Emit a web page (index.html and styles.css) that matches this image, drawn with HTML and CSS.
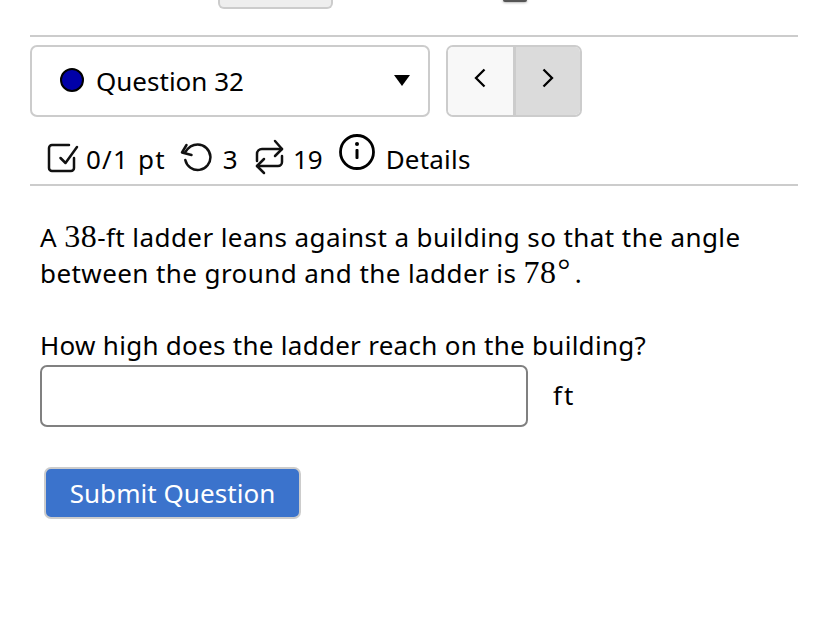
FILE: index.html
```html
<!DOCTYPE html>
<html lang="en">
<head>
    <meta charset="UTF-8">
    <title>Question 32</title>
    <link rel="stylesheet" href="styles.css">
</head>
<body>
    <div class="top-strip">
        <div class="stub-button"></div>
        <div class="stub-dot"></div>
    </div>

    <div class="question-nav">
        <div class="question-select">
            <span class="status-dot"></span>
            <span class="question-name">Question 32</span>
            <span class="select-arrow"></span>
        </div>
        <div class="nav-buttons">
            <div class="nav-btn">
                <svg width="14" height="22" viewBox="0 0 14 22"><path d="M11.500 2.500 3 11l8.500 8.500" fill="none" stroke="#000" stroke-width="2.300"/></svg>
            </div>
            <div class="nav-btn nav-btn-active">
                <svg width="14" height="22" viewBox="0 0 14 22"><path d="M2.500 2.500 11 11l-8.500 8.500" fill="none" stroke="#000" stroke-width="2.300"/></svg>
            </div>
        </div>
    </div>

    <div class="info-bar">
        <svg class="icon-check" width="32" height="30" viewBox="0 0 32 30" fill="none" stroke="#111" stroke-width="2.500" stroke-linecap="round" stroke-linejoin="round">
            <path d="M27 15v10a3 3 0 0 1-3 3H5a3 3 0 0 1-3-3V5a3 3 0 0 1 3-3h17"/>
            <path d="m13.500 15 5 5L30 4"/>
        </svg>
        <span class="info-text info-pts">0/1 pt</span>
        <svg class="icon-retry" width="32" height="30" viewBox="0 0 32 30" fill="none" stroke="#111" stroke-width="2.500" stroke-linecap="round" stroke-linejoin="round">
            <path d="M5 10.500Q10 2.600 17.700 2.600A12.700 12.700 0 1 1 5.300 18"/>
            <path d="M6.500 3 2 10.500l9.500 2.500"/>
        </svg>
        <span class="info-text info-tries">3</span>
        <svg class="icon-repeat" width="32" height="36" viewBox="0 0 32 36" fill="none" stroke="#111" stroke-width="2.500" stroke-linecap="round" stroke-linejoin="round">
            <path d="M4 22v-7a5 5 0 0 1 5-5h20"/>
            <path d="m22 2 7 8-7 7"/>
            <path d="M29 17v6a4 4 0 0 1-4 4H4"/>
            <path d="m11 20-7 7 7 7"/>
        </svg>
        <span class="info-text info-versions">19</span>
        <svg class="icon-info" width="36" height="36" viewBox="0 0 36 36">
            <circle cx="18" cy="18" r="16.500" fill="none" stroke="#000" stroke-width="2.800"/>
            <circle cx="18" cy="10" r="2" fill="#000"/>
            <rect x="16.500" y="15" width="3" height="10" rx="1" fill="#000"/>
        </svg>
        <span class="info-text info-details">Details</span>
    </div>

    <div class="question-body">
        <p class="question-text">A <span class="math">38</span>-ft ladder leans against a building so that the angle<br>between the ground and the ladder is <span class="math">78</span><span class="degree">°</span>.</p>
        <p class="question-ask">How high does the ladder reach on the building?</p>
        <div class="answer-row">
            <input class="answer-input" type="text">
            <span class="answer-unit">ft</span>
        </div>
        <button class="submit-btn">Submit Question</button>
    </div>
</body>
</html>
```

FILE: styles.css
```css
* {
    margin: 0;
    padding: 0;
    box-sizing: border-box;
}

body {
    font-family: "Noto Sans", sans-serif;
    font-size: 26px;
    letter-spacing: 0.28px;
    color: #000;
    background: white;
    padding: 0 30px;
    overflow: hidden;
}

.top-strip {
    height: 37px;
    border-bottom: 2px solid #ccc;
    display: flex;
    align-items: flex-start;
    overflow: hidden;
}

.stub-button {
    width: 115px;
    height: 9px;
    margin-left: 188px;
    background: #eee;
    border: 2px solid #ccc;
    border-top: none;
    border-radius: 0 0 6px 6px;
}

.stub-dot {
    width: 24px;
    height: 2px;
    margin-left: 170px;
    background: #555;
    border-radius: 0 0 12px 12px;
    box-shadow: 0 0 3px #666;
}

.question-nav {
    display: flex;
    gap: 16px;
    margin-top: 8px;
}

.question-select {
    width: 400px;
    height: 72px;
    border: 2px solid #ccc;
    border-radius: 7px;
    display: flex;
    align-items: center;
    padding: 0 18px 0 28px;
}

.status-dot {
    width: 24px;
    height: 24px;
    margin-top: -3px;
    border-radius: 50%;
    background: #0000a8;
    border: 2px solid #000;
}

.question-name {
    margin-left: 12px;
    flex: 1;
    white-space: nowrap;
    letter-spacing: 0;
}

.select-arrow {
    width: 0;
    height: 0;
    margin-top: -1px;
    border-left: 8px solid transparent;
    border-right: 8px solid transparent;
    border-top: 11px solid #000;
}

.nav-buttons {
    width: 136px;
    height: 72px;
    display: flex;
    border: 2px solid #ccc;
    border-radius: 7px;
    overflow: hidden;
}

.nav-btn {
    flex: 1;
    background: #f8f8f8;
    display: flex;
    align-items: center;
    justify-content: center;
    padding-bottom: 6px;
}

.nav-btn-active {
    background: #dbdbdb;
    border-left: 3px solid #ccc;
}

.info-bar {
    height: 69px;
    border-bottom: 2px solid #ccc;
    display: flex;
    align-items: center;
    padding-left: 17px;
}

.info-text {
    white-space: nowrap;
    margin-top: 16px;
}

.icon-check {
    margin-top: 14px;
}

.info-pts {
    margin-left: 7px;
    letter-spacing: 1.2px;
    word-spacing: 1px;
}

.icon-retry {
    margin-left: 14px;
    margin-top: 13px;
}

.info-tries {
    margin-left: 11px;
}

.icon-repeat {
    margin-left: 15px;
    margin-top: 13px;
}

.info-versions {
    margin-left: 8px;
    letter-spacing: 0;
}

.icon-info {
    margin-left: 16px;
    margin-top: 3px;
}

.info-details {
    margin-left: 11px;
    letter-spacing: 0.2px;
}

.question-body {
    padding: 33px 0 0 10px;
}

.question-text,
.question-ask {
    line-height: 36px;
    white-space: nowrap;
}

.question-text {
    letter-spacing: 0.42px;
}

.question-ask {
    margin-top: 36px;
}

.math {
    font-family: "Liberation Serif", serif;
    font-size: 32px;
    line-height: 0;
    letter-spacing: 0.5px;
}

.degree {
    font-family: "Liberation Serif", serif;
    font-size: 32px;
    vertical-align: 2px;
    line-height: 0;
    margin-left: 1px;
    margin-right: 4px;
}

.answer-row {
    display: flex;
    align-items: center;
    margin-top: 2px;
}

.answer-input {
    width: 488px;
    height: 62px;
    border: 2px solid #808080;
    border-radius: 7px;
    background: white;
}

.answer-unit {
    margin-left: 25px;
    margin-top: -2px;
    letter-spacing: 2px;
}

.submit-btn {
    display: block;
    width: 257px;
    height: 52px;
    margin: 40px 0 0 4px;
    background: #3b73cc;
    color: white;
    border: 2px solid #ccc;
    border-radius: 7px;
    font-family: "Noto Sans", sans-serif;
    font-size: 26px;
    letter-spacing: 0.05px;
}
```
